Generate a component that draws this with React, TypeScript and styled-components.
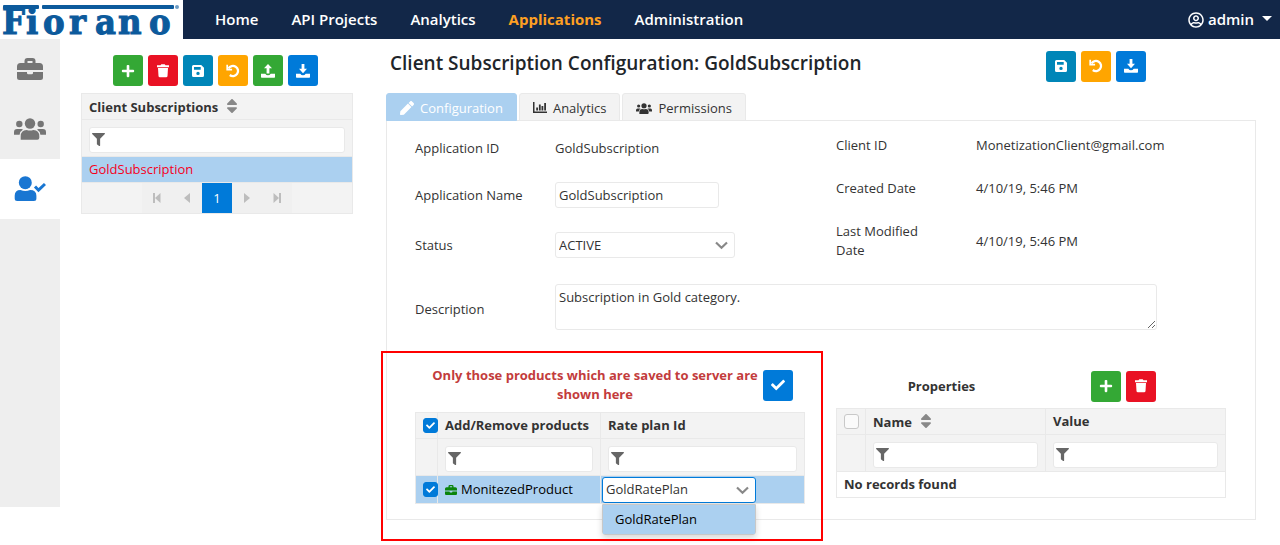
import React from "react";
import styled, { createGlobalStyle, css } from "styled-components";
import { FaCheck, FaFilter, FaPen, FaPlus, FaRegUserCircle, FaSort } from "react-icons/fa";

const c = {
  navy: "#122748",
  orange: "#ffa022",
  blue: "#007ad9",
  green: "#34a835",
  red: "#e91224",
  teal: "#0086b8",
  amber: "#ffa500",
  highlight: "#abd0f0",
  head: "#f3f3f3",
  line: "#e9e9e9",
  text: "#333333",
  icon: "#666666",
};

const GlobalStyle = createGlobalStyle`
  *, *::before, *::after { box-sizing: border-box; }
  body {
    margin: 0;
    background: #fff;
    color: ${c.text};
    font: 13px/19px "Open Sans", "Noto Sans", sans-serif;
  }
  button, input, select, textarea { font: inherit; color: inherit; }
  h1, h2, p, ul { margin: 0; padding: 0; }
  ul { list-style: none; }
`;

/* ---------- header ---------- */

const Header = styled.header`
  display: flex;
  align-items: center;
  height: 39px;
  background: ${c.navy};
  color: #fff;
  font-size: 15px;
  font-weight: 600;
`;

const LogoLink = styled.a`
  display: block;
  height: 39px;
  background: #fff;
`;

const LogoArt = styled.svg`
  display: block;
  overflow: visible;
`;

const Nav = styled.nav`
  display: flex;
  flex: 1;
  gap: 33px;
  padding-left: 32px;
`;

const NavLink = styled.a<{ $active?: boolean }>`
  color: ${(p) => (p.$active ? c.orange : "#fff")};
  font-weight: ${(p) => (p.$active ? 700 : 600)};
  text-decoration: none;
`;

const UserButton = styled.button`
  display: flex;
  align-items: center;
  gap: 4px;
  margin-right: 8px;
  padding: 0;
  border: 0;
  background: none;
`;

const Caret = styled.span`
  margin: 0 0 3px 4px;
  border: 5px solid transparent;
  border-top-color: #fff;
  border-bottom: 0;
`;

/* ---------- page frame ---------- */

const Page = styled.div`
  display: flex;
  align-items: flex-start;
`;

const Sidebar = styled.nav`
  flex: none;
  width: 60px;
  min-height: calc(100vh - 77px);
  background: #eeeeee;
`;

const SideLink = styled.a<{ $active?: boolean }>`
  display: flex;
  align-items: center;
  justify-content: center;
  height: 60px;
  background: ${(p) => (p.$active ? "#fff" : "transparent")};
  color: ${(p) => (p.$active ? "#1976d2" : "#757575")};
`;

const ListPane = styled.section`
  flex: none;
  width: 272px;
  margin-left: 21px;
  padding-top: 16px;
`;

const Main = styled.main`
  flex: 1;
  min-width: 0;
  margin: 0 24px 25px 33px;
`;

/* ---------- buttons ---------- */

const Toolbar = styled.div<{ $center?: boolean }>`
  display: flex;
  gap: 5px;
  justify-content: ${(p) => (p.$center ? "center" : "flex-start")};
`;

const ListToolbar = styled(Toolbar)`
  padding-right: 4px;
  margin-bottom: 7px;
`;

const IconButton = styled.button<{ $tone: string }>`
  display: flex;
  flex: none;
  align-items: center;
  justify-content: center;
  width: 30px;
  height: 31px;
  padding: 0;
  border: 0;
  border-radius: 3px;
  background: ${(p) => p.$tone};
  color: #fff;
  font-size: 14px;
`;

/* ---------- tables ---------- */

const Table = styled.table`
  width: 100%;
  table-layout: fixed;
  border-collapse: collapse;

  th,
  td {
    border: 1px solid ${c.line};
    padding: 0 7px;
    text-align: left;
  }
  thead th {
    height: 26px;
    background: ${c.head};
    font-weight: 700;
  }
  thead td {
    height: 37px;
    padding-top: 3px;
    background: ${c.head};
  }
`;

const SelectedRow = styled.tr<{ $tall?: boolean }>`
  height: ${(p) => (p.$tall ? 28 : 26)}px;
  background: ${c.highlight};
  color: #000;
`;

const EmptyRow = styled.tr`
  height: 26px;
  font-weight: 700;
`;

const SortIcon = styled(FaSort)`
  margin-left: 5px;
  color: #888;
  font-size: 18px;
  vertical-align: -3px;
`;

const FilterBox = styled.label`
  position: relative;
  display: block;
`;

const FilterIcon = styled(FaFilter)`
  position: absolute;
  top: 6px;
  left: 3px;
  color: ${c.icon};
  font-size: 13px;
`;

const fieldBox = css`
  border: 1px solid ${c.line};
  border-radius: 3px;
  background: #fff;
  outline: 0;
`;

const FilterInput = styled.input`
  ${fieldBox}
  display: block;
  width: 100%;
  height: 26px;
  padding: 0 4px 0 20px;
`;

const RedLink = styled.a`
  color: #f5001c;
  text-decoration: none;
`;

const Pager = styled.nav`
  display: flex;
  justify-content: center;
  border: 1px solid ${c.line};
  border-top: 0;
  background: ${c.head};
`;

const PageButton = styled.button<{ $current?: boolean }>`
  display: flex;
  align-items: center;
  justify-content: center;
  width: 30px;
  height: 30px;
  padding: 0;
  border: 0;
  background: ${(p) => (p.$current ? c.blue : "#f0f0f0")};
  color: ${(p) => (p.$current ? "#fff" : "#bdbdbd")};
`;

/* ---------- configuration panel ---------- */

const TitleBar = styled.div`
  display: flex;
  align-items: center;
  justify-content: space-between;
  height: 54px;
  padding: 0 110px 0 4px;
`;

const Title = styled.h1`
  padding-bottom: 6px;
  color: #212529;
  font-size: 19px;
  font-weight: 600;
  line-height: 28px;
`;

const Tabs = styled.div`
  display: flex;
  gap: 2px;
  margin-bottom: -1px;
`;

const Tab = styled.button<{ $active?: boolean }>`
  display: flex;
  align-items: center;
  gap: 6px;
  height: 28px;
  padding: 2px 13px 0;
  border: 1px solid ${(p) => (p.$active ? c.highlight : c.line)};
  border-radius: 3px 3px 0 0;
  background: ${(p) => (p.$active ? c.highlight : c.head)};
  color: ${(p) => (p.$active ? "#fff" : c.text)};
`;

const Panel = styled.section`
  padding: 0 29px 15px 28px;
  border: 1px solid ${c.line};
`;

const Columns = styled.div`
  display: grid;
  grid-template-columns: 1fr 1fr;
  column-gap: 31px;
  align-items: start;
`;

const FieldColumn = styled.div<{ $top: number }>`
  display: grid;
  row-gap: 24px;
  padding-top: ${(p) => p.$top}px;
`;

const Field = styled.div`
  display: grid;
  grid-template-columns: 140px 1fr;
  align-items: center;
`;

const DescriptionField = styled(Field)`
  margin: 24px 69px 36px 0;
  label {
    padding-top: 4px;
  }
`;

const TextInput = styled.input`
  ${fieldBox}
  width: 164px;
  height: 26px;
  padding: 0 3px;
`;

const TextArea = styled.textarea`
  ${fieldBox}
  display: block;
  width: 100%;
  height: 46px;
  padding: 3px;
  resize: vertical;
`;

const SelectBox = styled.div<{ $width: number }>`
  position: relative;
  width: ${(p) => p.$width}px;
`;

const Select = styled.select<{ $open?: boolean }>`
  ${fieldBox}
  display: block;
  width: 100%;
  height: 26px;
  padding: 0 24px 0 3px;
  border-color: ${(p) => (p.$open ? c.blue : c.line)};
  color: ${c.text};
  appearance: none;
`;

const SelectArrow = styled.svg`
  position: absolute;
  top: 9px;
  right: 7px;
  pointer-events: none;
`;

const Menu = styled.ul`
  position: absolute;
  z-index: 2;
  top: 27px;
  left: 0;
  right: 0;
  border: 1px solid #c8c8c8;
  border-radius: 0 0 3px 3px;
  box-shadow: 0 3px 6px rgba(0, 0, 0, 0.16);
`;

const MenuItem = styled.li`
  padding: 5px 12px;
  background: ${c.highlight};
  color: #000;
`;

/* ---------- products and properties ---------- */

const Products = styled.section`
  position: relative;
`;

const Callout = styled.div`
  position: absolute;
  z-index: 3;
  top: -15px;
  right: -18px;
  bottom: -37px;
  left: -34px;
  border: 2px solid #ff0000;
  pointer-events: none;
`;

const ProductsHead = styled.div`
  display: flex;
  align-items: center;
  height: 38px;
  margin-bottom: 8px;
  padding: 0 12px;
`;

const ProductsNote = styled.h2`
  flex: 1;
  color: #c33c3c;
  font-size: 13px;
  font-weight: 700;
  text-align: center;
`;

const PropertiesHead = styled.div`
  display: flex;
  align-items: center;
  height: 40px;
  margin-bottom: 2px;
  padding-right: 70px;
`;

const PropertiesTitle = styled.h2`
  flex: 1;
  padding-right: 44px;
  font-size: 13px;
  font-weight: 700;
  text-align: center;
`;

const ProductName = styled.span`
  display: flex;
  align-items: center;
  gap: 4px;
  svg {
    color: #0a840a;
  }
`;

const CheckCell = styled.td`
  && {
    padding: 0 0 0 7px;
  }
`;

const CheckHead = styled.th`
  && {
    padding: 0 0 0 7px;
  }
`;

const SelectCell = styled.td`
  && {
    padding: 0 1px;
  }
`;

const CheckLabel = styled.label`
  position: relative;
  display: block;
  width: 15px;
  height: 15px;
`;

const CheckInput = styled.input`
  display: block;
  width: 15px;
  height: 15px;
  margin: 0;
  border: 1px solid #c8c8c8;
  border-radius: 3px;
  background: #fafafa;
  appearance: none;
  &:checked {
    border-color: ${c.blue};
    background: ${c.blue};
  }
`;

const CheckMark = styled(FaCheck)`
  position: absolute;
  top: 3px;
  left: 3px;
  color: #fff;
  font-size: 9px;
  pointer-events: none;
`;

/* ---------- drawings ---------- */

function Logo() {
  return (
    <LogoArt width="183" height="39" viewBox="0 0 183 39" role="img" aria-label="Fiorano">
      <g fill="#0c5a9c" stroke="#0c5a9c">
        <text
          x="2 26 43 69 95 118 149"
          y="34"
          fontFamily="'DejaVu Serif Condensed', 'DejaVu Serif', serif"
          fontWeight="700"
          fontSize="36"
          strokeWidth="1"
        >
          Fiorano
        </text>
        <g stroke="none">
          <rect x="3" y="5" width="36" height="4" rx="1" />
          <rect x="42" y="5" width="132" height="4" rx="1" />
          <circle cx="177" cy="7" r="2" opacity="0.6" />
        </g>
      </g>
    </LogoArt>
  );
}

function BriefcaseIcon({ size }: { size: number }) {
  return (
    <svg width={size} height={size} viewBox="0 0 26 26" fill="currentColor">
      <path d="M7.500 7V5q0-3 3-3h5q3 0 3 3v2h4q3.500 0 3.500 3.500V14H0v-3.500Q0 7 3.500 7zm3 0h5V5h-5z" fillRule="evenodd" />
      <path d="M0 16h10v1q0 1.300 1.300 1.300h3.400q1.300 0 1.300-1.300v-1h10v5.500q0 2.500-2.500 2.500h-21Q0 24 0 21.500z" />
    </svg>
  );
}

function UsersIcon({ width }: { width: number }) {
  return (
    <svg width={width} viewBox="0 0 32 22" fill="currentColor">
      <circle cx="16" cy="5.500" r="5.200" />
      <circle cx="5.300" cy="6" r="3.200" />
      <circle cx="26.700" cy="6" r="3.200" />
      <path d="M6.700 21.800v-3.300q0-6.500 6-6.500 3.300 1.200 6.600 0 6 0 6 6.500v1.300q0 2-2 2z" />
      <path d="M0 16.800v-2.500q0-3.300 3-3.300h4.500q.8 0 1.500.6-3 1.700-3.400 5.200z" />
      <path d="M32 16.800v-2.500q0-3.300-3-3.300h-4.500q-.8 0-1.500.6 3 1.700 3.400 5.200z" />
    </svg>
  );
}

function UserCheckIcon() {
  return (
    <svg width="32" height="26" viewBox="0 0 32 26" fill="currentColor">
      <circle cx="11.300" cy="6.700" r="6.500" />
      <path d="M.7 22.500v-2.700q0-5.800 5.800-5.800 4.800 2 9.600 0 6.300 0 6.300 5.800v2.700q0 2.500-2.500 2.500H3.200Q.7 25 .7 22.500z" />
      <path d="m21 10.500 3.500 3.700L31 8" fill="none" stroke="currentColor" strokeWidth="3" />
    </svg>
  );
}

function TrashIcon() {
  return (
    <svg width="12" height="14" viewBox="0 0 12 14" fill="currentColor">
      <path d="M0 1.300h3.500L4.300.3h3.400l.8 1H12v1.900H0zM1 4h10l-.5 8q-.1 1.300-1.400 1.300H2.900Q1.600 13.300 1.500 12z" />
    </svg>
  );
}

function SaveIcon() {
  return (
    <svg width="12" height="12" viewBox="0 0 12 12" fill="currentColor" fillRule="evenodd">
      <path d="M1.500 0h7.700L12 2.800v7.700q0 1.500-1.500 1.500h-9Q0 12 0 10.500v-9Q0 0 1.500 0zM2 2v2.700h6.700V2zm4 4.700a1.700 1.700 0 1 0 0 3.400 1.700 1.700 0 0 0 0-3.400z" />
    </svg>
  );
}

function UndoIcon() {
  return (
    <svg width="14" height="14" viewBox="0 0 14 14" fill="none" stroke="currentColor">
      <path d="M2.500 4.500A5.100 5.100 0 1 1 3.800 11" strokeWidth="2.300" />
      <path d="M1.200.8v4.800h4.900" strokeWidth="1.700" />
    </svg>
  );
}

function TransferIcon({ up }: { up?: boolean }) {
  return (
    <svg width="14" height="14" viewBox="0 0 14 14" fill="currentColor">
      <path d="M0 9.700h4.300q1 1.600 2.700 1.600t2.700-1.600H14v3.400q0 .7-.7.7H.7q-.7 0-.7-.7z" />
      <path d={up ? "M7 0l4 4.300H8.400v5.200H5.600V4.300H3z" : "M5.600 0h2.800v4.700H11L7 9.300 3 4.700h2.600z"} />
    </svg>
  );
}

function ChartIcon() {
  return (
    <svg width="14" height="14" viewBox="0 0 14 14" fill="currentColor">
      <path d="M0 1h1.500v9.500H14V12H0zM3.200 6.500H5v3H3.200zM5.900 3.500h1.800v6H5.900zM8.500 5h1.800v4.500H8.500zM11.200 2H13v7.500h-1.800z" />
    </svg>
  );
}

function Arrow() {
  return (
    <SelectArrow width="13" height="9" viewBox="0 0 13 9" fill="none" stroke="#888" strokeWidth="2.200">
      <path d="M1 1.500 6.500 6.700 12 1.500" />
    </SelectArrow>
  );
}

function PageArrow({ back, bar }: { back?: boolean; bar?: boolean }) {
  return (
    <svg width="10" height="12" viewBox="0 0 10 12" fill="currentColor">
      <g transform={back ? undefined : "matrix(-1 0 0 1 10 0)"}>
        {bar && <path d="M1 1h2v10H1z" />}
        <path d={bar ? "M8.500 1v10L3 6z" : "M8 1v10L2 6z"} />
      </g>
    </svg>
  );
}

/* ---------- shared controls ---------- */

function Filter({ label }: { label: string }) {
  return (
    <FilterBox>
      <FilterIcon />
      <FilterInput type="text" aria-label={label} />
    </FilterBox>
  );
}

function Check({ label, checked }: { label: string; checked?: boolean }) {
  return (
    <CheckLabel>
      <CheckInput type="checkbox" aria-label={label} defaultChecked={checked} />
      {checked && <CheckMark />}
    </CheckLabel>
  );
}

const navItems = ["Home", "API Projects", "Analytics", "Applications", "Administration"];

export default function App() {
  return (
    <>
      <GlobalStyle />
      <Header>
        <LogoLink href="#home">
          <Logo />
        </LogoLink>
        <Nav>
          {navItems.map((item) => (
            <NavLink key={item} href="#nav" $active={item === "Applications"}>
              {item}
            </NavLink>
          ))}
        </Nav>
        <UserButton type="button">
          <FaRegUserCircle size={16} />
          admin
          <Caret />
        </UserButton>
      </Header>

      <Page>
        <Sidebar>
          <SideLink href="#products" aria-label="Products">
            <BriefcaseIcon size={26} />
          </SideLink>
          <SideLink href="#clients" aria-label="Clients">
            <UsersIcon width={32} />
          </SideLink>
          <SideLink href="#subscriptions" aria-label="Subscriptions" $active>
            <UserCheckIcon />
          </SideLink>
        </Sidebar>

        <ListPane>
          <ListToolbar $center>
            <IconButton type="button" aria-label="Add" $tone={c.green}><FaPlus /></IconButton>
            <IconButton type="button" aria-label="Delete" $tone={c.red}><TrashIcon /></IconButton>
            <IconButton type="button" aria-label="Save" $tone={c.teal}><SaveIcon /></IconButton>
            <IconButton type="button" aria-label="Undo" $tone={c.amber}><UndoIcon /></IconButton>
            <IconButton type="button" aria-label="Import" $tone={c.green}><TransferIcon up /></IconButton>
            <IconButton type="button" aria-label="Export" $tone={c.blue}><TransferIcon /></IconButton>
          </ListToolbar>
          <Table>
            <thead>
              <tr>
                <th>Client Subscriptions<SortIcon /></th>
              </tr>
              <tr>
                <td><Filter label="Filter subscriptions" /></td>
              </tr>
            </thead>
            <tbody>
              <SelectedRow>
                <td><RedLink href="#gold">GoldSubscription</RedLink></td>
              </SelectedRow>
            </tbody>
          </Table>
          <Pager>
            <PageButton type="button" aria-label="First page"><PageArrow back bar /></PageButton>
            <PageButton type="button" aria-label="Previous page"><PageArrow back /></PageButton>
            <PageButton type="button" $current>1</PageButton>
            <PageButton type="button" aria-label="Next page"><PageArrow /></PageButton>
            <PageButton type="button" aria-label="Last page"><PageArrow bar /></PageButton>
          </Pager>
        </ListPane>

        <Main>
          <TitleBar>
            <Title>Client Subscription Configuration: GoldSubscription</Title>
            <Toolbar>
              <IconButton type="button" aria-label="Save" $tone={c.teal}><SaveIcon /></IconButton>
              <IconButton type="button" aria-label="Undo" $tone={c.amber}><UndoIcon /></IconButton>
              <IconButton type="button" aria-label="Export" $tone={c.blue}><TransferIcon /></IconButton>
            </Toolbar>
          </TitleBar>
          <Tabs>
            <Tab type="button" $active><FaPen size={14} />Configuration</Tab>
            <Tab type="button"><ChartIcon />Analytics</Tab>
            <Tab type="button"><UsersIcon width={16} />Permissions</Tab>
          </Tabs>
          <Panel>
            <Columns>
              <FieldColumn $top={18}>
                <Field>
                  <span>Application ID</span>
                  <span>GoldSubscription</span>
                </Field>
                <Field>
                  <label htmlFor="app-name">Application Name</label>
                  <TextInput id="app-name" type="text" defaultValue="GoldSubscription" />
                </Field>
                <Field>
                  <label htmlFor="status">Status</label>
                  <SelectBox $width={180}>
                    <Select id="status" defaultValue="ACTIVE">
                      <option>ACTIVE</option>
                    </Select>
                    <Arrow />
                  </SelectBox>
                </Field>
              </FieldColumn>
              <FieldColumn $top={15}>
                <Field>
                  <span>Client ID</span>
                  <span>MonetizationClient@gmail.com</span>
                </Field>
                <Field>
                  <span>Created Date</span>
                  <span>4/10/19, 5:46 PM</span>
                </Field>
                <Field>
                  <span>Last Modified<br />Date</span>
                  <span>4/10/19, 5:46 PM</span>
                </Field>
              </FieldColumn>
            </Columns>
            <DescriptionField>
              <label htmlFor="description">Description</label>
              <TextArea id="description" defaultValue="Subscription in Gold category." />
            </DescriptionField>
            <Columns>
              <Products>
                <ProductsHead>
                  <ProductsNote>Only those products which are saved to server are shown here</ProductsNote>
                  <IconButton type="button" aria-label="Apply" $tone={c.blue}><FaCheck /></IconButton>
                </ProductsHead>
                <Table>
                  <colgroup>
                    <col style={{ width: 22 }} />
                    <col style={{ width: 163 }} />
                    <col />
                  </colgroup>
                  <thead>
                    <tr>
                      <CheckHead><Check label="Select all products" checked /></CheckHead>
                      <th>Add/Remove products</th>
                      <th>Rate plan Id</th>
                    </tr>
                    <tr>
                      <td />
                      <td><Filter label="Filter products" /></td>
                      <td><Filter label="Filter rate plans" /></td>
                    </tr>
                  </thead>
                  <tbody>
                    <SelectedRow $tall>
                      <CheckCell><Check label="Select MonitezedProduct" checked /></CheckCell>
                      <td><ProductName><BriefcaseIcon size={12} />MonitezedProduct</ProductName></td>
                      <SelectCell>
                        <SelectBox $width={154}>
                          <Select aria-label="Rate plan" defaultValue="GoldRatePlan" $open>
                            <option>GoldRatePlan</option>
                          </Select>
                          <Arrow />
                          <Menu role="listbox" aria-label="Rate plans">
                            <MenuItem role="option" aria-selected>GoldRatePlan</MenuItem>
                          </Menu>
                        </SelectBox>
                      </SelectCell>
                    </SelectedRow>
                  </tbody>
                </Table>
                <Callout />
              </Products>
              <section>
                <PropertiesHead>
                  <PropertiesTitle>Properties</PropertiesTitle>
                  <Toolbar>
                    <IconButton type="button" aria-label="Add property" $tone={c.green}><FaPlus /></IconButton>
                    <IconButton type="button" aria-label="Delete property" $tone={c.red}><TrashIcon /></IconButton>
                  </Toolbar>
                </PropertiesHead>
                <Table>
                  <colgroup>
                    <col style={{ width: 29 }} />
                    <col />
                    <col />
                  </colgroup>
                  <thead>
                    <tr>
                      <CheckHead><Check label="Select all properties" /></CheckHead>
                      <th>Name<SortIcon /></th>
                      <th>Value</th>
                    </tr>
                    <tr>
                      <td />
                      <td><Filter label="Filter names" /></td>
                      <td><Filter label="Filter values" /></td>
                    </tr>
                  </thead>
                  <tbody>
                    <EmptyRow>
                      <td colSpan={3}>No records found</td>
                    </EmptyRow>
                  </tbody>
                </Table>
              </section>
            </Columns>
          </Panel>
        </Main>
      </Page>
    </>
  );
}
